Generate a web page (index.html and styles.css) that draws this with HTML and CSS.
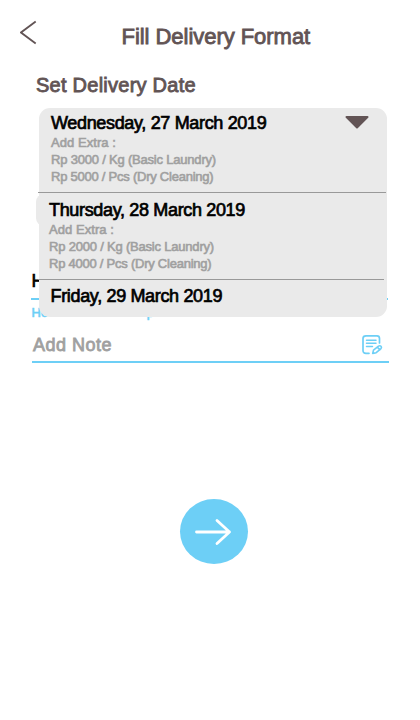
FILE: index.html
```html
<!DOCTYPE html>
<html lang="en">
<head>
<meta charset="utf-8">
<title>Fill Delivery Format</title>
<link rel="stylesheet" href="styles.css">
</head>
<body>
<main class="screen">
  <header class="bar">
    <svg class="back" width="18" height="26" viewBox="0 0 18 26"><path d="M15.700 2.500 1 13.500 15.700 24.500" fill="none" stroke="#625455" stroke-width="1.8"/></svg>
    <h1 class="title">Fill Delivery Format</h1>
  </header>
  <h2 class="heading">Set Delivery Date</h2>
  <section class="picker">
    <div class="select"></div>
    <div class="hours">H</div>
    <div class="hint"><span>Ho</span><span class="hint-end">p</span></div>
    <div class="menu">
      <div class="option first">
        <div class="date">Wednesday, 27 March 2019</div>
        <div class="extra label">Add Extra :</div>
        <div class="extra kg">Rp 3000 / Kg (Basic Laundry)</div>
        <div class="extra pcs">Rp 5000 / Pcs (Dry Cleaning)</div>
        <svg class="caret" width="24" height="14" viewBox="0 0 24 14"><path d="M1.500 2h21L12 12.500Z" fill="#625455" stroke="#625455" stroke-width="2" stroke-linejoin="round"/></svg>
      </div>
      <div class="option second">
        <div class="date">Thursday, 28 March 2019</div>
        <div class="extra label">Add Extra :</div>
        <div class="extra kg">Rp 2000 / Kg (Basic Laundry)</div>
        <div class="extra pcs">Rp 4000 / Pcs (Dry Cleaning)</div>
      </div>
      <div class="option third">
        <div class="date">Friday, 29 March 2019</div>
      </div>
    </div>
  </section>
  <div class="note">
    <span class="note-text">Add Note</span>
    <svg class="note-icon" width="22" height="20" viewBox="0 0 22 20" fill="none" stroke="#6dcff6" stroke-linecap="round" stroke-linejoin="round"><path d="M7 18.300H4Q1 18.300 1 15.500V3.500Q1 .900 4 .900h11Q17.500 .900 17.500 3.500V8" stroke-width="1.700"/><path d="M4.500 5.200h9.500M4.500 8.300h9.500M4.500 11.400h6" stroke-width="1.500"/><path d="m10.700 18.400.8-3.300 5-4q1.500-.8 2.500.2t0 2.300l-4.800 4.100Zm4.800-6 2.300 2.400" stroke-width="1.600"/></svg>
  </div>
  <button class="next" aria-label="Next"><svg width="38" height="28" viewBox="0 0 38 28"><path d="M1.500 14h33M22 2.500 34.500 14 22 25.500" fill="none" stroke="#fff" stroke-width="2.800" stroke-linecap="round" stroke-linejoin="round"/></svg></button>
</main>
</body>
</html>
```
FILE: styles.css
```css
* { box-sizing: border-box; }
body {
  margin: 0;
  background: #fff;
  font-family: "Liberation Sans", Arial, sans-serif;
}
.screen {
  width: 420px;
  height: 720px;
  overflow: hidden;
  display: flex;
  flex-direction: column;
}
.bar {
  height: 70px;
  padding: 19px 0 0 20px;
  display: flex;
  align-items: flex-start;
}
.back { flex: none; }
.title {
  margin: 4px 0 0 83.5px;
  font-size: 22px;
  line-height: 28px;
  font-weight: 400;
  letter-spacing: -0.04px;
  color: #625455;
  -webkit-text-stroke: 0.85px #625455;
  white-space: nowrap;
}
.heading {
  margin: 3px 0 0 36px;
  height: 35px;
  font-size: 20px;
  line-height: 24px;
  font-weight: 400;
  letter-spacing: 0.25px;
  color: #625455;
  -webkit-text-stroke: 0.85px #625455;
}
.picker {
  position: relative;
  height: 217px;
  padding-top: 86px;
}
.select {
  width: 347px;
  height: 32px;
  margin-left: 36px;
  border-radius: 8px;
  background: #eaeaea;
}
.hours {
  width: 357px;
  height: 74px;
  margin-left: 31px;
  padding: 45px 0 0 0.5px;
  border-bottom: 2px solid #6dcff6;
  font-size: 18px;
  line-height: 20px;
  color: #000;
  -webkit-text-stroke: 0.7px #000;
}
.hint {
  margin-left: 31.5px;
  display: flex;
  gap: 98.5px;
  padding-top: 5px;
  font-size: 13px;
  line-height: 16px;
  color: #6dcff6;
  -webkit-text-stroke: 0.6px #6dcff6;
}
.menu {
  position: absolute;
  left: 39px;
  top: 0;
  width: 348px;
  height: 209px;
  border-radius: 11px;
  background: #eaeaea;
}
.option {
  position: relative;
  white-space: nowrap;
}
.first {
  width: 348px;
  height: 85px;
  margin-left: -1px;
  padding: 4px 0 0 13px;
  border-bottom: 1px solid #999;
}
.second {
  width: 346px;
  height: 87px;
  margin-left: -1px;
  padding: 6px 0 0 11px;
  border-bottom: 1px solid #999;
}
.third { padding: 5px 0 0 11.5px; }
.date {
  font-size: 18px;
  line-height: 22px;
  letter-spacing: -0.34px;
  color: #000;
  -webkit-text-stroke: 0.7px #000;
}
.extra {
  font-size: 13px;
  line-height: 17px;
  letter-spacing: -0.2px;
  color: #a0a0a0;
  -webkit-text-stroke: 0.6px #a0a0a0;
}
.label { letter-spacing: 0.05px; }
.pcs { letter-spacing: -0.24px; }
.caret {
  position: absolute;
  right: 17.5px;
  top: 7px;
}
.note {
  width: 357px;
  height: 38px;
  margin-left: 32px;
  padding: 9px 5px 0 1px;
  display: flex;
  justify-content: space-between;
  align-items: flex-start;
  border-bottom: 2px solid #6dcff6;
}
.note-text {
  font-size: 18px;
  line-height: 22px;
  letter-spacing: 0.5px;
  color: #a0a0a0;
  -webkit-text-stroke: 0.8px #a0a0a0;
}
.note-icon { margin-top: 1px; }
.next {
  width: 68px;
  height: 65px;
  margin: 136px 0 0 180px;
  padding: 0;
  border: 0;
  border-radius: 50%;
  background: #6dcff6;
  display: flex;
  align-items: center;
  justify-content: center;
}
```
